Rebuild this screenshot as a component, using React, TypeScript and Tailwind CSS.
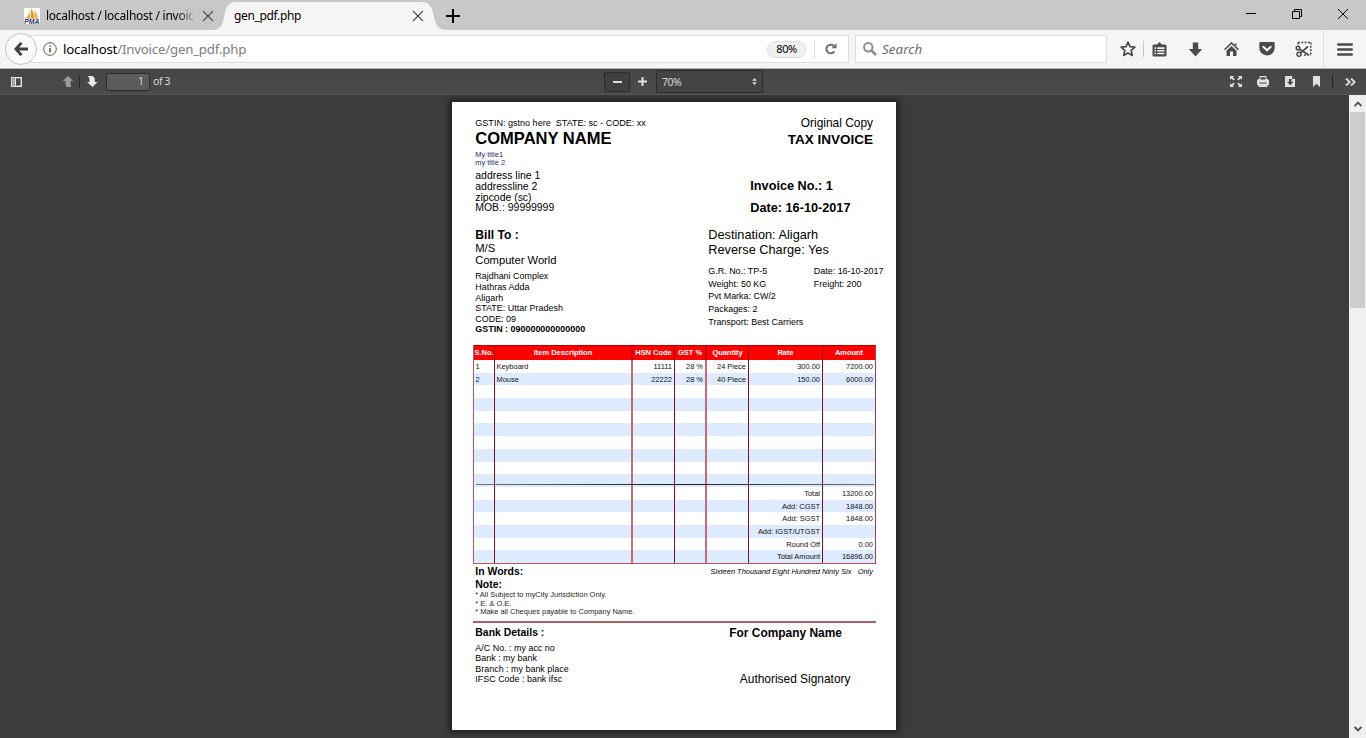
import type { ReactNode } from "react";

const row = ["", "", "", "", "", "", ""];
const items: string[][] = [
  ["1", "Keyboard", "11111", "28 %", "24 Piece", "300.00", "7200.00"],
  ["2", "Mouse", "22222", "28 %", "40 Piece", "150.00", "6000.00"],
  row, row, row, row, row, row, row, row,
  ["", "", "", "", "", "Total", "13200.00"],
  ["", "", "", "", "", "Add: CGST", "1848.00"],
  ["", "", "", "", "", "Add: SGST", "1848.00"],
  ["", "", "", "", "", "Add: IGST/UTGST", ""],
  ["", "", "", "", "", "Round Off", "0.00"],
  ["", "", "", "", "", "Total Amount", "16896.00"],
];

const headers = ["S.No.", "Item Description", "HSN Code", "GST %", "Quantity", "Rate", "Amount"];

const cellBorders = [
  "border-r border-[#7d1218]",
  "border-r-2 border-[#bd7074]",
  "border-r border-[#7d1218]",
  "border-r-2 border-[#bd7074]",
  "border-r border-[#7d1218]",
  "border-r border-[#7d1218]",
  "border-r border-[#a04046]",
];

const headBorders = [
  "border-r border-r-[#8e0000]",
  "border-r-2 border-r-[#c80000]",
  "border-r border-r-[#8e0000]",
  "border-r-2 border-r-[#c80000]",
  "border-r border-r-[#8e0000]",
  "border-r border-r-[#8e0000]",
  "border-r border-r-[#a04046]",
];

const gridCols = "grid grid-cols-[21px_138px_42px_32px_42px_74px_53px]";

function Line({ className, children }: { className: string; children: ReactNode }) {
  return <div className={"flex items-center whitespace-pre " + className}>{children}</div>;
}

function CloseX({ className }: { className: string }) {
  return (
    <svg className={className} viewBox="0 0 12 12" fill="none" stroke="currentColor" strokeWidth="1.1">
      <path d="M1 1l10 10M11 1L1 11" />
    </svg>
  );
}

function TabBar() {
  return (
    <div className="flex h-[30px] shrink-0 bg-[#c8c8c8] text-[12px] text-black">
      <div className="flex w-[218px] items-center pl-6 pt-[2px]">
        <svg className="size-4 shrink-0" viewBox="0 0 16 16">
          <rect width="16" height="16" fill="#fff" />
          <path d="M6 1C6 5 4.500 8 2 10h4z" fill="#f9a11b" />
          <path d="M7 .5v9.700h3C9.800 6 9 2.500 7 .5z" fill="#f68b1f" />
          <path d="M10.300 2c.4 3 .4 6 .2 8.200H14C13.600 7 12.500 4 10.300 2z" fill="#fbb040" />
          <path d="M1.500 10.700h13" stroke="#8a8fb5" strokeWidth=".6" />
          <text x="0.300" y="15.800" fontSize="6.800" fontWeight="bold" fontStyle="italic" fontFamily="Liberation Sans, sans-serif" fill="#2c2f6b">PMA</text>
        </svg>
        <div className="ml-[6px] w-[150px] whitespace-nowrap bg-gradient-to-r from-black from-85% to-[#c0c0c0] bg-clip-text tracking-[-0.26px] text-transparent">
          localhost / localhost / invoic
        </div>
        <CloseX className="ml-[6px] size-3 shrink-0 text-[#4a4a4a]" />
      </div>
      <div className="relative z-10 flex w-[226px] items-center pt-[2px]">
        <svg className="absolute left-0 top-0 overflow-visible" width="226" height="30" viewBox="0 0 226 30">
          <path d="M-6 30C3 30 4.500 24 6 17C8 7 10 2 19 2H203C212 2 214 7 216 17C217.500 24 219 30 230 30Z" fill="#f5f5f5" />
        </svg>
        <span className="relative pl-4 tracking-[-0.35px]">gen_pdf.php</span>
        <CloseX className="relative ml-auto mr-[20px] size-3 text-[#4a4a4a]" />
      </div>
      <svg className="ml-[2px] mt-[9px] size-[14px]" viewBox="0 0 14 14" stroke="#000" strokeWidth="2">
        <path d="M7 0v14M0 7h14" />
      </svg>
      <div className="ml-auto flex pt-[9px]">
        <svg className="mr-[36px] h-[10px] w-[10px]" viewBox="0 0 10 10" stroke="#000">
          <path d="M0 4.500h10" />
        </svg>
        <svg className="mr-[36px] size-[10px]" viewBox="0 0 10 10" stroke="#000" fill="none">
          <path d="M.5 2.500h7v7h-7zM2.500 2.500v-2h7v7h-2" />
        </svg>
        <svg className="mr-[18px] size-[10px]" viewBox="0 0 10 10" stroke="#000" fill="none">
          <path d="M0 0l10 10M10 0L0 10" />
        </svg>
      </div>
    </div>
  );
}

function NavBar() {
  return (
    <div className="flex h-[39px] shrink-0 items-center border-b border-[#b0b0b0] bg-[#f5f5f5]">
      <div className="relative z-10 ml-[5px] flex size-8 shrink-0 items-center justify-center rounded-full border border-[#c3c3c3] bg-[#fafafa]">
        <svg className="size-[14px]" viewBox="0 0 14 14" fill="none" stroke="#404040" strokeWidth="2.800">
          <path d="M7.500 .8L1.800 7l5.700 6.200M2 7h12" />
        </svg>
      </div>
      <div className="-ml-4 flex h-7 w-[828px] items-center border border-[#dedede] bg-white">
        <svg className="ml-[21px] size-[14px] shrink-0" viewBox="0 0 14 14" fill="none" stroke="#5a5a5a">
          <circle cx="7" cy="7" r="6.300" />
          <path d="M7 6v4.500M7 3.300v1.500" strokeWidth="1.600" />
        </svg>
        <div className="ml-[6px] mt-[2px] text-[13.300px] tracking-[-0.22px] text-[#7d7d7d]">
          <span className="text-black">localhost</span>/Invoice/gen_pdf.php
        </div>
        <div className="ml-auto flex h-[17px] w-[39px] items-center justify-center rounded-full border border-[#dcdcdc] bg-[#f0f0f0] pt-px text-[11px] tracking-[-0.4px] text-black">
          80%
        </div>
        <div className="ml-2 h-[18px] w-px bg-[#d8d8d8]" />
        <svg className="ml-[10px] mr-[11px] size-3" viewBox="0 0 12 12">
          <path d="M9.300 8.400A4.300 4.300 0 1 1 8.700 2.900" fill="none" stroke="#6e6e6e" strokeWidth="2" />
          <path d="M11.500 0v5.200H6.300z" fill="#6e6e6e" />
        </svg>
      </div>
      <div className="ml-[6px] flex h-7 w-[252px] items-center border border-[#dedede] bg-white">
        <svg className="ml-[7px] size-[14px]" viewBox="0 0 14 14" fill="none" stroke="#8c8c8c">
          <circle cx="5.300" cy="5.300" r="4.200" strokeWidth="2" />
          <path d="M8.500 8.500l4.500 4.500" strokeWidth="2.600" />
        </svg>
        <span className="ml-[5px] mt-[2px] text-[13.300px] italic tracking-[0.1px] text-[#6c6c6c]">Search</span>
      </div>
      <div className="ml-[13px] flex flex-1 items-center text-[#4a4a4a]">
        <svg className="size-4" viewBox="0 0 16 16" fill="none" stroke="currentColor" strokeWidth="1.700" strokeLinejoin="round">
          <path d="M8 1.200l2 4.400 4.900.5-3.700 3.300 1.100 5L8 11.900l-4.300 2.500 1.100-5L1.100 6.100 6 5.600z" />
        </svg>
        <div className="ml-[7px] h-4 w-px bg-[#c4c4c4]" />
        <svg className="ml-2 size-[15px]" viewBox="0 0 15 15">
          <path d="M5 2.500L7.500 0 10 2.500h3a1.500 1.500 0 0 1 1.500 1.500v9a1.500 1.500 0 0 1-1.500 1.500H2A1.500 1.500 0 0 1 .5 13V4A1.500 1.500 0 0 1 2 2.500z" fill="currentColor" />
          <path d="M2.500 5.300h1.500v1.600H2.500zM2.500 8h1.500v1.600H2.500zM2.500 10.700h1.500v1.600H2.500zM5.200 5.300h7.300v1.600H5.200zM5.200 8h7.300v1.600H5.200zM5.200 10.700h7.300v1.600H5.200z" fill="#f5f5f5" />
        </svg>
        <svg className="ml-[21px] size-[15px]" viewBox="0 0 15 15" fill="currentColor">
          <path d="M4.800 .5h5.400v6.500h4L7.500 14.500.8 7h4z" />
        </svg>
        <svg className="ml-[21px] size-[15px]" viewBox="0 0 15 15">
          <path d="M.5 7.800L7.500 1l7 6.800" fill="none" stroke="currentColor" strokeWidth="1.600" />
          <path d="M10.500 1.500h2v3l-2-2zM7.500 4l5 4.800V14H9v-4.500H6V14H2.500V8.800z" fill="currentColor" />
        </svg>
        <svg className="ml-[20px] size-4" viewBox="0 0 16 16">
          <path d="M1.500 1h13A1.200 1.200 0 0 1 15.700 2.200V7a7.700 7.400 0 0 1-15.400 0V2.200A1.200 1.200 0 0 1 1.500 1z" fill="currentColor" />
          <path d="M4.300 5.700L8 9.300l3.700-3.600" fill="none" stroke="#f5f5f5" strokeWidth="2" strokeLinecap="round" />
        </svg>
        <svg className="ml-[20px] size-[17px]" viewBox="0 0 17 17" fill="none" stroke="currentColor">
          <path d="M3 1.500h13M15.800 1.500v12.500M3 1.500v3" strokeWidth="1.500" strokeDasharray="2 1.300" />
          <path d="M9 14h7" strokeWidth="1.500" strokeDasharray="2 1.300" />
          <circle cx="3" cy="7" r="1.800" strokeWidth="1.500" />
          <circle cx="4" cy="13.300" r="2" strokeWidth="1.500" />
          <path d="M4.500 8.200l8.500 5.300M5.500 11.800L13 5.500" strokeWidth="1.700" />
        </svg>
        <div className="ml-[11px] h-[37px] w-px bg-[#dddddd]" />
        <svg className="ml-[13px] h-[13px] w-4" viewBox="0 0 16 13" stroke="currentColor" strokeWidth="2.600" strokeLinecap="round">
          <path d="M1.300 1.500h13.400M1.300 6.500h13.400M1.300 11.500h13.400" />
        </svg>
      </div>
    </div>
  );
}

function PdfToolbar() {
  return (
    <div className="flex h-[26px] shrink-0 items-center border-b border-[#555555] bg-gradient-to-b from-[#454545] to-[#4b4b4b] text-[10.500px] text-[#d9d9d9]">
      <svg className="ml-[11px] h-[10px] w-[11px]" viewBox="0 0 11 10">
        <rect x=".7" y=".7" width="9.600" height="8.600" fill="none" stroke="#e4e4e4" strokeWidth="1.400" />
        <rect x="2" y="2" width="1.800" height="6" fill="#bbb" />
        <path d="M4.500 1v8" stroke="#e4e4e4" />
      </svg>
      <svg className="ml-10 h-[11px] w-3" viewBox="0 0 12 11" fill="#9a9a9a">
        <path d="M6 0l5.500 5H8.500v2c0 2 .3 3 1 4H5C4 10 3.500 8.500 3.500 7V5H.5z" />
      </svg>
      <div className="ml-[5px] h-[13px] w-px bg-[#262626]" />
      <svg className="ml-[6px] h-[11px] w-3" viewBox="0 0 12 11" fill="#e8e8e8">
        <path d="M6.500 11l5-5H8.800V4c0-2-1-3.500-3-4H1.500C3 1 3.500 2 3.500 4v2H1z" />
      </svg>
      <div className="ml-2 flex h-[18px] w-[44px] items-center justify-end rounded-[2px] border border-[#2c2c2c] bg-[#5b5b5b] pr-[5px] pt-px">1</div>
      <span className="ml-[3px] mt-px tracking-[-0.4px]">of 3</span>
      <div className="ml-[434px] flex h-5 w-[26px] items-center justify-center rounded-[2px] border border-[#2b2b2b] bg-[#404040]">
        <div className="h-[2px] w-[9px] bg-[#dcdcdc]" />
      </div>
      <svg className="ml-[8px] size-[9px]" viewBox="0 0 9 9" stroke="#e0e0e0" strokeWidth="2">
        <path d="M4.500 0v9M0 4.500h9" />
      </svg>
      <div className="ml-[9px] flex h-[23px] w-[107px] items-center rounded-[2px] border border-[#2b2b2b] bg-[#444444] pl-[5px] pr-[5px] tracking-[-0.6px]">
        <span className="mt-[3px]">70%</span>
        <svg className="ml-auto h-[7px] w-[5px]" viewBox="0 0 5 7" fill="#e0e0e0">
          <path d="M2.500 0L4.800 2.700H.2zM2.500 7L.2 4.300h4.600z" />
        </svg>
      </div>
      <div className="ml-auto flex items-center pr-[9px] text-[#e0e0e0]">
        <svg className="h-[11px] w-3" viewBox="0 0 12 11" fill="currentColor">
          <path d="M0 0h4L2.800 1.200l2 2L3.500 4.400l-2-2L0 3.800zM12 0v3.800L10.500 2.400l-2 2-1.300-1.200 2-2L8 0zM0 11V7.200l1.500 1.400 2-2 1.300 1.200-2 2L4 11zM12 11H8l1.200-1.200-2-2 1.300-1.200 2 2L12 7.200z" />
        </svg>
        <svg className="ml-[15px] h-[11px] w-3" viewBox="0 0 12 11">
          <path d="M2.500 0h7v3h1.300L12 4.500V9h-1.500v2h-9V9H0V4.500L1.200 3h1.300z" fill="currentColor" />
          <path d="M3.500 1.200h5V3.600h-5zM2.300 6.500h7.400v1H2.300z" fill="#4a4a4a" />
        </svg>
        <svg className="ml-4 h-[11px] w-[10px]" viewBox="0 0 10 11">
          <path d="M0 0h7l3 3v8H0z" fill="currentColor" />
          <path d="M4 3h2.500v2.800h2L5.200 9.200 2 5.800h2zM7 0v3h3z" fill="#484848" />
        </svg>
        <svg className="ml-[18px] h-[11px] w-[7px]" viewBox="0 0 7 11" fill="currentColor">
          <path d="M0 0h7v11L3.500 7.700 0 11z" />
        </svg>
        <div className="ml-3 h-[13px] w-px bg-[#222222]" />
        <svg className="ml-[12px] mr-px h-2 w-[11px]" viewBox="0 0 11 8" fill="none" stroke="currentColor" strokeWidth="1.800">
          <path d="M1 .5L4.800 4 1 7.500M6 .5L9.800 4 6 7.500" />
        </svg>
      </div>
    </div>
  );
}

function InvoiceTable() {
  return (
    <div className="relative ml-[21px] w-[403px] border-b border-l border-[#b05a60] text-[7.460px] text-[#111111]">
      <div className={gridCols + " h-[15px] bg-[#ff0000] font-bold text-white"}>
        {headers.map((h, i) => (
          <div key={h} className={"flex items-center justify-center whitespace-nowrap border-t border-t-[#c00000] " + headBorders[i]}>{h}</div>
        ))}
      </div>
      {items.map((r, n) => (
        <div key={n} className={gridCols + " h-[12.690px] " + (n % 2 ? "bg-[#deebff]" : "bg-white")}>
          {r.map((c, i) => (
            <div key={i} className={"flex items-center whitespace-nowrap pt-[0.400px] " + (i > 1 ? "justify-end pr-[2px] " : "pl-[1.500px] ") + cellBorders[i]}>{c}</div>
          ))}
        </div>
      ))}
      <div className="absolute left-[2px] top-[139px] h-px w-[398px] bg-gradient-to-r from-[#6d7780] via-[#111c26] to-[#6d7780]" />
    </div>
  );
}

function Invoice() {
  return (
    <div className="flex h-[628px] w-[444px] flex-col bg-white pt-[14px] font-['Liberation_Sans',Arial,sans-serif] text-[8.950px] text-black shadow-[0_0_6px_3px_#222222]">
      <div className="flex h-[229px] shrink-0 pl-[23.300px]">
        <div className="flex w-[233px] flex-col">
          <Line className="h-[14px] pt-[2px] text-[9.050px]">{"GSTIN: gstno here  STATE: sc - CODE: xx"}</Line>
          <Line className="h-[19px] text-[16.550px] font-bold">COMPANY NAME</Line>
          <Line className="mt-[2px] h-2 text-[7.460px] text-[#1c2c66]">My title1</Line>
          <Line className="h-2 text-[7.460px] text-[#1c2c66]">my title 2</Line>
          <div className="mt-[4px] text-[10.440px]">
            <Line className="h-[10.600px]">address line 1</Line>
            <Line className="h-[10.600px]">addressline 2</Line>
            <Line className="h-[10.600px]">zipcode (sc)</Line>
            <Line className="h-[10.600px]">MOB.: 99999999</Line>
          </div>
          <Line className="mt-[14.600px] h-[14px] text-[12.100px] font-bold">Bill To :</Line>
          <Line className="h-[12px] text-[11.200px]">M/S</Line>
          <Line className="h-[13px] text-[11.200px]">Computer World</Line>
          <div className="mt-[4.800px]">
            <Line className="h-[10.600px]">Rajdhani Complex</Line>
            <Line className="h-[10.600px]">Hathras Adda</Line>
            <Line className="h-[10.600px]">Aligarh</Line>
            <Line className="h-[10.600px]">STATE: Uttar Pradesh</Line>
            <Line className="h-[10.600px]">CODE: 09</Line>
            <Line className="h-[10.600px] font-bold">GSTIN : 090000000000000</Line>
          </div>
        </div>
        <div className="flex flex-1 flex-col">
          <Line className="h-[14px] justify-end pr-[23px] pt-[2px] text-[11.930px]">Original Copy</Line>
          <Line className="h-[19px] justify-end pr-[23px] pt-[2px] text-[13.500px] font-bold">TAX INVOICE</Line>
          <Line className="ml-[42px] mt-[30px] h-[15px] text-[12.700px] font-bold">Invoice No.: 1</Line>
          <Line className="ml-[42px] mt-[7px] h-[15px] text-[12.700px] font-bold">Date: 16-10-2017</Line>
          <Line className="mt-[11px] h-[15px] text-[12.750px]">Destination: Aligarh</Line>
          <Line className="h-[15px] text-[12.750px]">Reverse Charge: Yes</Line>
          <div className="mt-[8.300px] grid grid-cols-[105.500px_1fr]">
            <Line className="h-[12.700px]">G.R. No.: TP-5</Line>
            <Line className="h-[12.700px]">Date: 16-10-2017</Line>
            <Line className="h-[12.700px]">Weight: 50 KG</Line>
            <Line className="h-[12.700px]">Freight: 200</Line>
            <Line className="h-[12.700px]">Pvt Marka: CW/2</Line>
            <span />
            <Line className="h-[12.700px]">Packages: 2</Line>
            <span />
            <Line className="h-[12.700px]">Transport: Best Carriers</Line>
          </div>
        </div>
      </div>
      <InvoiceTable />
      <div className="flex h-[57px] shrink-0 justify-between pl-[23.300px] pr-[23px]">
        <div>
          <Line className="mt-px h-[13px] text-[10.440px] font-bold">In Words:</Line>
          <Line className="h-[13px] pt-px text-[10.440px] font-bold">Note:</Line>
          <div className="-mt-[0.500px] text-[7.460px] text-[#2a1c1c]">
            <Line className="h-[8.500px]">* All Subject to myCity Jurisdiction Only.</Line>
            <Line className="h-[8.500px]">* E. &amp; O.E.</Line>
            <Line className="h-[8.500px]">* Make all Cheques payable to Company Name.</Line>
          </div>
        </div>
        <Line className="mt-px h-[13px] text-[7.460px] italic">{"Sixteen Thousand Eight Hundred Ninty Six   Only"}</Line>
      </div>
      <div className="ml-[21px] h-[2px] w-[403px] shrink-0 bg-[#b06064]" />
      <div className="flex pl-[23.300px]">
        <div className="w-[254px]">
          <Line className="mt-[3px] h-[14px] text-[10.440px] font-bold">Bank Details :</Line>
          <div className="mt-[3px]">
            <Line className="h-[10.600px]">A/C No. : my acc no</Line>
            <Line className="h-[10.600px]">Bank : my bank</Line>
            <Line className="h-[10.600px]">Branch : my bank place</Line>
            <Line className="h-[10.600px]">IFSC Code : bank ifsc</Line>
          </div>
        </div>
        <div className="text-[11.930px]">
          <Line className="mt-[4px] h-[14px] font-bold">For Company Name</Line>
          <Line className="ml-[10.500px] mt-[32px] h-[14px]">Authorised Signatory</Line>
        </div>
      </div>
    </div>
  );
}

function Scrollbar() {
  return (
    <div className="flex w-[17px] shrink-0 flex-col items-center bg-[#f0f0f0]">
      <svg className="mt-[6px] h-[6px] w-2" viewBox="0 0 8 6" fill="none" stroke="#505050" strokeWidth="1.800">
        <path d="M.6 5L4 1.500 7.400 5" />
      </svg>
      <div className="mt-[5px] h-[196px] w-[15px] bg-[#cdcdcd]" />
      <svg className="mb-[6px] mt-auto h-[6px] w-2" viewBox="0 0 8 6" fill="none" stroke="#505050" strokeWidth="1.800">
        <path d="M.6 1L4 4.500 7.400 1" />
      </svg>
    </div>
  );
}

export default function App() {
  return (
    <div className="flex h-[738px] w-[1366px] flex-col overflow-hidden font-['Noto_Sans','Open_Sans',sans-serif]">
      <TabBar />
      <NavBar />
      <PdfToolbar />
      <div className="flex min-h-0 flex-1 bg-[#3c3c3c]">
        <div className="flex flex-1 items-start overflow-hidden pl-[452px] pt-[7px]">
          <Invoice />
        </div>
        <Scrollbar />
      </div>
    </div>
  );
}
